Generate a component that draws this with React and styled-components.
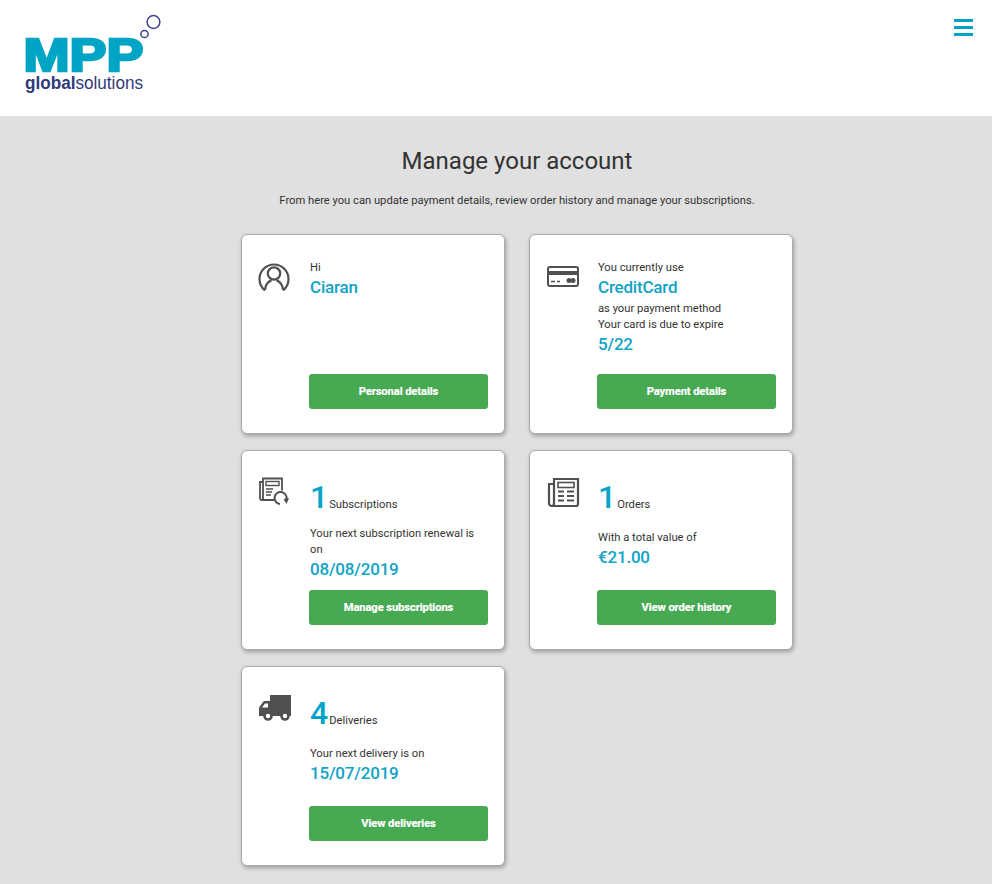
import styled, { createGlobalStyle } from "styled-components";

const GlobalStyle = createGlobalStyle`
  html, body {
    margin: 0;
    padding: 0;
    background: #e0e0e0;
    font-family: Roboto, "Liberation Sans", sans-serif;
  }
`;

const IconSvg = ({ children }) => (
  <svg width="36" height="36" viewBox="0 0 36 36" fill="none" stroke="#505050" strokeWidth="2">
    {children}
  </svg>
);

const UserIcon = () => (
  <IconSvg>
    <path d="M7 31.5C3.6 28.8 1.5 24.8 1.5 20 1.5 12 8 5.5 16 5.5S30.5 12 30.5 20c0 4.8-2.1 8.8-5.5 11.5" strokeWidth="2.2" />
    <circle cx="16" cy="14.5" r="6.2" strokeWidth="2.2" />
    <path d="M7 31c.4-5 3.2-8.4 6.5-9.6M25 31c-.4-5-3.2-8.4-6.5-9.6" strokeWidth="2.2" />
  </IconSvg>
);

const CardIcon = () => (
  <IconSvg>
    <rect x="2" y="8" width="30" height="19" rx="2" strokeWidth="2" />
    <rect x="2" y="12" width="30" height="4" fill="#505050" stroke="none" />
    <path d="M5 22.5h4M11 22.5h3" strokeWidth="1.4" />
    <circle cx="23" cy="21.5" r="2.5" fill="#505050" stroke="none" />
    <circle cx="27" cy="21.5" r="2.5" fill="#505050" stroke="none" />
  </IconSvg>
);

const SubscriptionIcon = () => (
  <IconSvg>
    <path d="M5 7H2v16c0 1 .6 2 2 2h12" strokeWidth="1.8" />
    <path d="M5 24V3.5h19v12" strokeWidth="1.8" />
    <rect x="8" y="6.5" width="13" height="4" strokeWidth="1.4" />
    <path d="M8 14h7M8 17h6M8 20h5" strokeWidth="1.4" />
    <path d="M22 29a6 6 0 1 1 6.5-5" strokeWidth="2" />
    <path d="M25.5 24l5.5-1-2.5 6z" fill="#505050" stroke="none" />
  </IconSvg>
);

const OrdersIcon = () => (
  <IconSvg>
    <path d="M7 9H3v19c0 1.8 1 3 3 3h24c1.2 0 2-.8 2-2V4H8v24c0 1.6-.6 3-2 3" strokeWidth="2.2" />
    <rect x="12" y="7.5" width="16" height="5" strokeWidth="1.6" />
    <path d="M12 16.5h6M21 16.5h7M12 21h6M21 21h7M12 25.5h6M21 25.5h7" strokeWidth="2.2" />
  </IconSvg>
);

const TruckIcon = () => (
  <IconSvg>
    <rect x="12" y="4" width="21" height="21" fill="#505050" stroke="none" />
    <path d="M1 25v-8.5l4.5-6c.4-.4.8-.5 1.5-.5h6v15z" fill="#505050" stroke="none" />
    <path d="M4 16.5l3-4h3v4z" fill="#fff" stroke="none" />
    <circle cx="10" cy="25" r="3.5" fill="#fff" strokeWidth="2.6" />
    <circle cx="27" cy="25" r="3.5" fill="#fff" strokeWidth="2.6" />
  </IconSvg>
);

const Logo = () => (
  <svg width="140" height="84" viewBox="0 0 140 84" fill="none">
    <text
      x="-1.5"
      y="59"
      fontFamily="'Liberation Sans', sans-serif"
      fontWeight="700"
      fontSize="47"
      fill="#00a4c4"
      stroke="#00a4c4"
      strokeWidth="2.6"
      textLength="120"
      lengthAdjust="spacingAndGlyphs"
    >
      MPP
    </text>
    <text
      x="0"
      y="77"
      fontFamily="'Liberation Sans', sans-serif"
      fontSize="19"
      fill="#2f3a79"
      textLength="118"
      lengthAdjust="spacingAndGlyphs"
    >
      <tspan fontWeight="700">global</tspan>
      <tspan fontWeight="400">solutions</tspan>
    </text>
    <circle cx="119.5" cy="22" r="3.6" stroke="#3a4488" strokeWidth="1.5" />
    <circle cx="128.5" cy="10" r="6.4" stroke="#3a4488" strokeWidth="1.5" />
  </svg>
);

const App = () => {
  return (
    <>
      <GlobalStyle />
      <Header>
        <Logo />
        <MenuButton aria-label="Menu">
          <span />
          <span />
          <span />
        </MenuButton>
      </Header>
      <Main>
        <Title>Manage your account</Title>
        <Intro>From here you can update payment details, review order history and manage your subscriptions.</Intro>
        <CardGrid>
          <Card>
            <IconSlot><UserIcon /></IconSlot>
            <CardBody>
              <CardText>
                <Small>Hi</Small>
                <Value>Ciaran</Value>
              </CardText>
              <ActionButton>Personal details</ActionButton>
            </CardBody>
          </Card>
          <Card>
            <IconSlot><CardIcon /></IconSlot>
            <CardBody>
              <CardText>
                <Small>You currently use</Small>
                <Value>CreditCard</Value>
                <Small>as your payment method</Small>
                <Small>Your card is due to expire</Small>
                <Value>5/22</Value>
              </CardText>
              <ActionButton>Payment details</ActionButton>
            </CardBody>
          </Card>
          <Card>
            <IconSlot><SubscriptionIcon /></IconSlot>
            <CardBody>
              <CardText>
                <CountRow $gap={8}>
                  <Count>1</Count>
                  <CountLabel>Subscriptions</CountLabel>
                </CountRow>
                <Small>Your next subscription renewal is on</Small>
                <Value>08/08/2019</Value>
              </CardText>
              <ActionButton>Manage subscriptions</ActionButton>
            </CardBody>
          </Card>
          <Card>
            <IconSlot><OrdersIcon /></IconSlot>
            <CardBody>
              <CardText>
                <CountRow $gap={12}>
                  <Count>1</Count>
                  <CountLabel>Orders</CountLabel>
                </CountRow>
                <Small>With a total value of</Small>
                <Value>€21.00</Value>
              </CardText>
              <ActionButton>View order history</ActionButton>
            </CardBody>
          </Card>
          <Card>
            <IconSlot><TruckIcon /></IconSlot>
            <CardBody>
              <CardText>
                <CountRow $gap={12}>
                  <Count>4</Count>
                  <CountLabel>Deliveries</CountLabel>
                </CountRow>
                <Small>Your next delivery is on</Small>
                <Value>15/07/2019</Value>
              </CardText>
              <ActionButton>View deliveries</ActionButton>
            </CardBody>
          </Card>
        </CardGrid>
      </Main>
    </>
  );
};

const Header = styled.header`
  display: flex;
  justify-content: space-between;
  align-items: flex-start;
  height: 116px;
  box-sizing: border-box;
  padding: 12px 19px 0 25px;
  background-color: #fff;
`;

const MenuButton = styled.button`
  display: flex;
  flex-direction: column;
  gap: 4px;
  width: 19px;
  margin-top: 7px;
  padding: 0;
  border: 0;
  background: none;

  span {
    display: block;
    height: 3px;
    background-color: #00a4c8;
  }
`;

const Main = styled.main`
  box-sizing: border-box;
  height: 768px;
  overflow: hidden;
  padding: 29px 0 0 42px;
  background-color: #e0e0e0;
  color: #333;
`;

const Title = styled.h1`
  margin: 0;
  font-size: 24px;
  line-height: 32px;
  font-weight: 400;
  text-align: center;
`;

const Intro = styled.p`
  margin: 16px 0 25px;
  font-size: 11.2px;
  line-height: 16px;
  text-align: center;
`;

const CardGrid = styled.div`
  display: grid;
  grid-template-columns: 264px 264px;
  grid-auto-rows: 200px;
  gap: 16px 24px;
  justify-content: center;
`;

const Card = styled.section`
  display: grid;
  grid-template-columns: 51px 179px;
  box-sizing: border-box;
  padding: 24px 16px;
  background-color: #fff;
  border: 1px solid #aaa;
  border-radius: 6px;
  box-shadow: 1px 2px 4px rgba(0, 0, 0, 0.3);
`;

const IconSlot = styled.div`
  line-height: 0;
`;

const CardBody = styled.div`
  display: flex;
  flex-direction: column;
  justify-content: space-between;
`;

const CardText = styled.div`
  padding: 1px 0 0 1px;
`;

const Small = styled.div`
  font-size: 11.2px;
  line-height: 16px;
`;

const Value = styled.div`
  font-size: 17px;
  letter-spacing: -0.2px;
  line-height: 23px;
  margin-bottom: 2px;
  font-weight: 500;
  color: #0fa3c6;
`;

const CountRow = styled.div`
  display: flex;
  align-items: baseline;
  height: 42px;
  margin-bottom: ${(props) => props.$gap}px;
`;

const Count = styled.span`
  font-size: 32px;
  line-height: 42px;
  font-weight: 500;
  color: #00a4c8;
`;

const CountLabel = styled.span`
  margin-left: 1px;
  font-size: 11.2px;
  line-height: 16px;
`;

const ActionButton = styled.button`
  width: 179px;
  height: 35px;
  padding: 0;
  border: 0;
  border-radius: 3px;
  background-color: #47a952;
  color: #fff;
  font-family: inherit;
  font-size: 11.2px;
  letter-spacing: -0.1px;
  font-weight: 700;
  -webkit-text-stroke: 0.2px #fff;
`;

export default App;
